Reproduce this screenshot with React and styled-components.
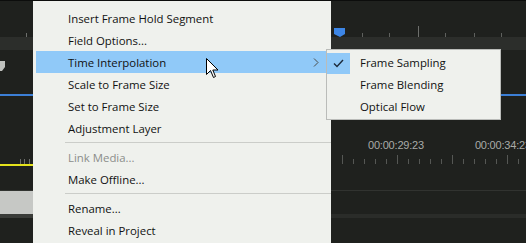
import React from "react";
import styled, { createGlobalStyle } from "styled-components";

const Global = createGlobalStyle`
  html, body { margin: 0; padding: 0; background: #1f211e; }
  body { font-family: "Open Sans", "Noto Sans", sans-serif; }
`;

const Stage = styled.div`
  position: relative;
  width: 526px;
  height: 243px;
  overflow: hidden;
  background: #1f211e;
  display: flex;
  flex-direction: column;
`;

const Band = styled.div`
  position: relative;
  height: ${(p) => p.$h}px;
  flex: none;
  background: ${(p) => p.$bg || "#1f211e"};
  border-top: ${(p) => (p.$line ? `1px solid ${p.$line}` : "none")};
  display: flex;
  align-items: ${(p) => p.$align || "stretch"};
`;

const LeftCell = styled.div`
  width: 33px;
  flex: none;
  background: ${(p) => p.$bg || "transparent"};
`;

const Timecodes = styled.div`
  display: flex;
  gap: 51px;
  padding-left: 368px;
  padding-bottom: 2px;
  font-family: "Liberation Sans", Arial, sans-serif;
  font-size: 11px;
  letter-spacing: -0.2px;
  color: #a9aba8;
  white-space: nowrap;
`;

const Menu = styled.div`
  position: absolute;
  left: 33px;
  top: 1px;
  width: 298px;
  height: 260px;
  background: #eff1ed;
  padding-top: 6px;
  box-sizing: border-box;
  font-size: 11.4px;
  color: #111;
`;

const Item = styled.div`
  position: relative;
  height: 22px;
  display: flex;
  align-items: center;
  padding-left: 32px;
  margin: 0 3px;
  background: ${(p) => (p.$active ? "#90c9f8" : "transparent")};
  color: ${(p) => (p.$disabled ? "#8b8d8a" : "#111")};
  white-space: nowrap;
`;

const Arrow = styled.svg`
  position: absolute;
  left: 277px;
  top: 7px;
`;

const Sep = styled.div`
  height: 7px;
  display: flex;
  align-items: center;
  padding-left: 32px;
  &::after {
    content: "";
    flex: 1;
    height: 1px;
    background: #cbcdc9;
  }
`;

const Sub = styled.div`
  position: absolute;
  left: 326px;
  top: 49px;
  width: 175px;
  height: 71px;
  box-sizing: border-box;
  background: #eff1ed;
  border: 1px solid #babcb9;
  padding-top: 2px;
  font-size: 11.4px;
  color: #111;
`;

const SubItem = styled.div`
  height: 22px;
  display: flex;
  align-items: center;
  white-space: nowrap;
`;

const SubLabel = styled.span`
  position: relative;
  top: -1px;
`;

const CheckCell = styled.div`
  width: 23px;
  height: 21px;
  margin-right: 10px;
  display: flex;
  align-items: center;
  justify-content: center;
  background: ${(p) => (p.$on ? "#90c9f8" : "transparent")};
`;

const Cursor = styled.svg`
  position: absolute;
  left: 206px;
  top: 58px;
`;

const menuItems = [
  { label: "Insert Frame Hold Segment" },
  { label: "Field Options..." },
  { label: "Time Interpolation", active: true, sub: true },
  { label: "Scale to Frame Size" },
  { label: "Set to Frame Size" },
  { label: "Adjustment Layer" },
  { sep: true },
  { label: "Link Media...", disabled: true },
  { label: "Make Offline..." },
  { sep: true },
  { label: "Rename..." },
  { label: "Reveal in Project" },
];

const subItems = ["Frame Sampling", "Frame Blending", "Optical Flow"];

const RulerTop = () => (
  <svg width="526" height="37" style={{ position: "absolute", left: 0, top: 0 }}>
    <rect x="0" y="0" width="526" height="1" fill="#0c0d0c" />
    <line x1="26.5" y1="33" x2="26.5" y2="37" stroke="#6d6f6c" />
    {[362, 389, 445, 474, 501].map((x) => (
      <line key={x} x1={x + 0.5} y1="33" x2={x + 0.5} y2="37" stroke="#5f615e" />
    ))}
    <line x1="418.5" y1="26" x2="418.5" y2="37" stroke="#6d6f6c" />
    <path d="M334 28 H345 V34 L340 37 L334 34 Z" fill="#3d86e6" />
  </svg>
);

const RulerTicks = () => (
  <svg width="526" height="12" style={{ position: "absolute", left: 0, top: 0 }}>
    {[20, 24, 29].map((x) => (
      <line key={x} x1={x + 0.5} y1="6" x2={x + 0.5} y2="12" stroke="#6a6c69" />
    ))}
    {Array.from({ length: 18 }, (_, i) => 342 + i * 11).map((x, i) => (
      <line
        key={x}
        x1={x + 0.5}
        y1={i % 5 === 0 ? 2 : 6}
        x2={x + 0.5}
        y2="12"
        stroke="#555754"
      />
    ))}
  </svg>
);

const App = () => {
  return (
    <>
      <Global />
      <Stage>
        <Band $h={37}>
          <RulerTop />
        </Band>
        <Band $h={13} $bg="#2c2e2b" />
        <Band $h={44}>
          <LeftCell>
            <svg width="33" height="44">
              <path d="M0 11 H5 V17 L2 21 H0 Z" fill="#bfc1be" />
            </svg>
          </LeftCell>
        </Band>
        <Band $h={2} $bg="#3c7fd6" />
        <Band $h={57} $align="flex-end">
          <Timecodes>
            <span>00:00:29:23</span>
            <span>00:00:34:23</span>
          </Timecodes>
        </Band>
        <Band $h={11}>
          <RulerTicks />
        </Band>
        <Band $h={2}>
          <LeftCell $bg="#e4e21c" />
        </Band>
        <Band $h={24} />
        <Band $h={23} $line="#313330">
          <LeftCell $bg="#c6c8c5" />
        </Band>
        <Band $h={4} $bg="#2a2c29">
          <LeftCell $bg="#3a3c39" />
        </Band>
        <Band $h={40} />

        <Menu>
          {menuItems.map((m, i) =>
            m.sep ? (
              <Sep key={i} />
            ) : (
              <Item key={i} $active={m.active} $disabled={m.disabled}>
                {m.label}
                {m.sub && (
                  <Arrow width="6" height="9" viewBox="0 0 6 9">
                    <path d="M1 0.5 L5 4.5 L1 8.5" fill="none" stroke="#4a4c4a" strokeWidth="1" />
                  </Arrow>
                )}
              </Item>
            )
          )}
        </Menu>

        <Sub>
          {subItems.map((s, i) => (
            <SubItem key={s}>
              <CheckCell $on={i === 0}>
                {i === 0 && (
                  <svg width="11" height="9" viewBox="0 0 11 9">
                    <path d="M1 4.5 L4 7.5 L10 1" fill="none" stroke="#1c2a3a" strokeWidth="1.4" />
                  </svg>
                )}
              </CheckCell>
              <SubLabel>{s}</SubLabel>
            </SubItem>
          ))}
        </Sub>

        <Cursor width="13" height="21" viewBox="0 0 13 21">
          <path
            d="M0.5 0.5 V16.5 L4.5 12.5 L7.5 19.5 L9.5 18.5 L6.8 12 H12 Z"
            fill="#fff"
            stroke="#000"
            strokeWidth="1"
            strokeLinejoin="round"
          />
        </Cursor>
      </Stage>
    </>
  );
};

export default App;
